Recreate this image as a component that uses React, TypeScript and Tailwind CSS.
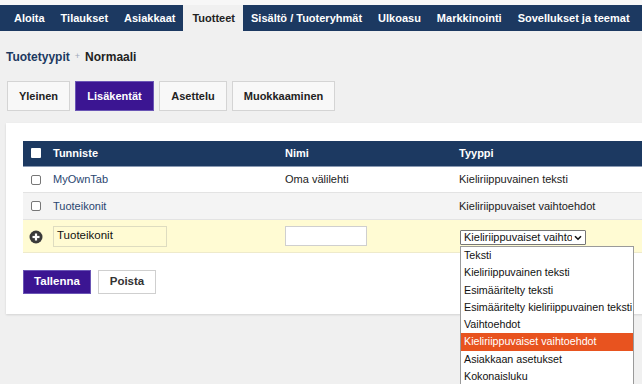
import React from "react";

const NAV = ["Aloita", "Tilaukset", "Asiakkaat", "Tuotteet", "Sisältö / Tuoteryhmät", "Ulkoasu", "Markkinointi", "Sovellukset ja teemat"];
const OPTIONS = [
  "Teksti",
  "Kieliriippuvainen teksti",
  "Esimääritelty teksti",
  "Esimääritelty kieliriippuvainen teksti",
  "Vaihtoehdot",
  "Kieliriippuvaiset vaihtoehdot",
  "Asiakkaan asetukset",
  "Kokonaisluku",
];

export default function App() {
  return (
    <div
      className="w-[642px] h-[384px] overflow-hidden bg-[#f0f0f0] text-[11px] text-[#222]"
      style={{ fontFamily: '"Liberation Sans", Arial, sans-serif' }}
    >
      <div className="h-[5px] bg-[#f7f7f7]" />
      <nav className="flex h-[26px] bg-[#1c3961] pl-[6px] whitespace-nowrap">
        {NAV.map((n) => (
          <div
            key={n}
            className={
              "px-2 leading-[26px] font-bold text-[11px] " +
              (n === "Tuotteet" ? "bg-[#f0f0f0] text-[#222] pl-[9px]" : "text-white")
            }
          >
            {n}
          </div>
        ))}
      </nav>

      <div className="flex items-center h-[20px] mt-[16px] pl-[6px] text-[12px] font-bold">
        <span className="text-[#1c3961]">Tuotetyypit</span>
        <span className="mx-[5px] text-[9px] text-[#a0a8b8] font-normal">+</span>
        <span className="text-[#222]">Normaali</span>
      </div>

      <div className="flex gap-[5px] mt-[14px] pl-[7px] h-[30px]">
        <div className="w-[63px] flex items-center justify-center border border-[#d4d4d4] bg-[#f8f8f8] font-bold">Yleinen</div>
        <div className="w-[79px] flex items-center justify-center border border-[#6a55b5] bg-[#3b1592] text-white font-bold">Lisäkentät</div>
        <div className="w-[68px] flex items-center justify-center border border-[#d4d4d4] bg-[#f8f8f8] font-bold">Asettelu</div>
        <div className="w-[103px] flex items-center justify-center border border-[#d4d4d4] bg-[#f8f8f8] font-bold">Muokkaaminen</div>
      </div>

      <div className="mt-[12px] ml-[6px] w-[700px] h-[191px] bg-white shadow-[0_1px_2px_rgba(0,0,0,0.12)] pt-[18px] pl-[17px]">
        <div className="relative w-[660px]">
          {/* header */}
          <div className="flex h-[26px] items-center bg-[#1c3961] text-white font-bold border-b border-[#8a9ab3]">
            <div className="w-[30px] flex pl-[8px]">
              <div className="w-[10px] h-[10px] bg-white rounded-[1px] mt-[-2px]" />
            </div>
            <div className="w-[232px]">Tunniste</div>
            <div className="w-[174px]">Nimi</div>
            <div className="flex-1">Tyyppi</div>
          </div>
          {/* row 1 */}
          <div className="flex h-[26px] items-center bg-white border-b border-[#e3e3e3]">
            <div className="w-[30px] flex pl-[8px]">
              <div className="w-[10px] h-[10px] border border-[#777] rounded-[2px] bg-white" />
            </div>
            <div className="w-[232px] text-[#2a4670]">MyOwnTab</div>
            <div className="w-[174px]">Oma välilehti</div>
            <div className="flex-1">Kieliriippuvainen teksti</div>
          </div>
          {/* row 2 */}
          <div className="flex h-[27px] items-center bg-[#f4f4f4] border-b border-[#e3e3e3]">
            <div className="w-[30px] flex pl-[8px]">
              <div className="w-[10px] h-[10px] border border-[#777] rounded-[2px] bg-white" />
            </div>
            <div className="w-[232px] text-[#2a4670]">Tuoteikonit</div>
            <div className="w-[174px]"></div>
            <div className="flex-1">Kieliriippuvaiset vaihtoehdot</div>
          </div>
          {/* row 3 */}
          <div className="flex h-[33px] items-center bg-[#fffbd3] border-b border-[#eeeacb]">
            <div className="w-[30px] flex pl-[6px]">
              <svg width="14" height="14" viewBox="0 0 14 14" className="mt-[1px]">
                <circle cx="7" cy="7" r="6.5" fill="#3a3a3a" />
                <rect x="3.5" y="5.9" width="7" height="2.2" fill="#fff" />
                <rect x="5.9" y="3.5" width="2.2" height="7" fill="#fff" />
              </svg>
            </div>
            <div className="w-[232px]">
              <div className="w-[114px] h-[21px] border border-[#dedcc0] bg-[#fffbd3] pl-[3px] flex items-center text-[11.5px] text-[#111]">Tuoteikonit</div>
            </div>
            <div className="w-[174px]">
              <div className="w-[82px] h-[20px] border border-[#cfcfcf] bg-white" />
            </div>
            <div className="flex-1 pl-[1px]">
              <div className="w-[126px] h-[15px] border border-[#767676] bg-white flex items-center justify-between pl-[3px] pr-[3px] mt-[3px] rounded-[1px]">
                <span className="text-[11px] leading-[13px] text-[#111] overflow-hidden whitespace-nowrap w-[108px]">Kieliriippuvaiset vaihtoehdot</span>
                <svg width="8" height="6" viewBox="0 0 8 6">
                  <path d="M1 1.2 L4 4.2 L7 1.2" fill="none" stroke="#111" strokeWidth="1.6" />
                </svg>
              </div>
            </div>
          </div>

          {/* dropdown list */}
          <div className="absolute left-[437px] top-[105px] w-[174px] bg-white border border-[#9a9a9a] z-10 text-[10.7px] text-[#111] whitespace-nowrap">
            {OPTIONS.map((o) => (
              <div
                key={o}
                className={
                  "h-[17.3px] leading-[17px] pl-[3px] " +
                  (o === "Kieliriippuvaiset vaihtoehdot" ? "bg-[#e8531f] text-white" : "")
                }
              >
                {o}
              </div>
            ))}
          </div>
        </div>

        <div className="flex gap-[7px] mt-[17px]">
          <div className="w-[68px] h-[24px] flex items-center justify-center bg-[#3b1592] border border-[#6a55b5] text-white font-bold text-[11.5px]">Tallenna</div>
          <div className="w-[58px] h-[24px] flex items-center justify-center bg-white border border-[#cfcfcf] font-bold text-[11.5px] text-[#333]">Poista</div>
        </div>
      </div>
    </div>
  );
}
